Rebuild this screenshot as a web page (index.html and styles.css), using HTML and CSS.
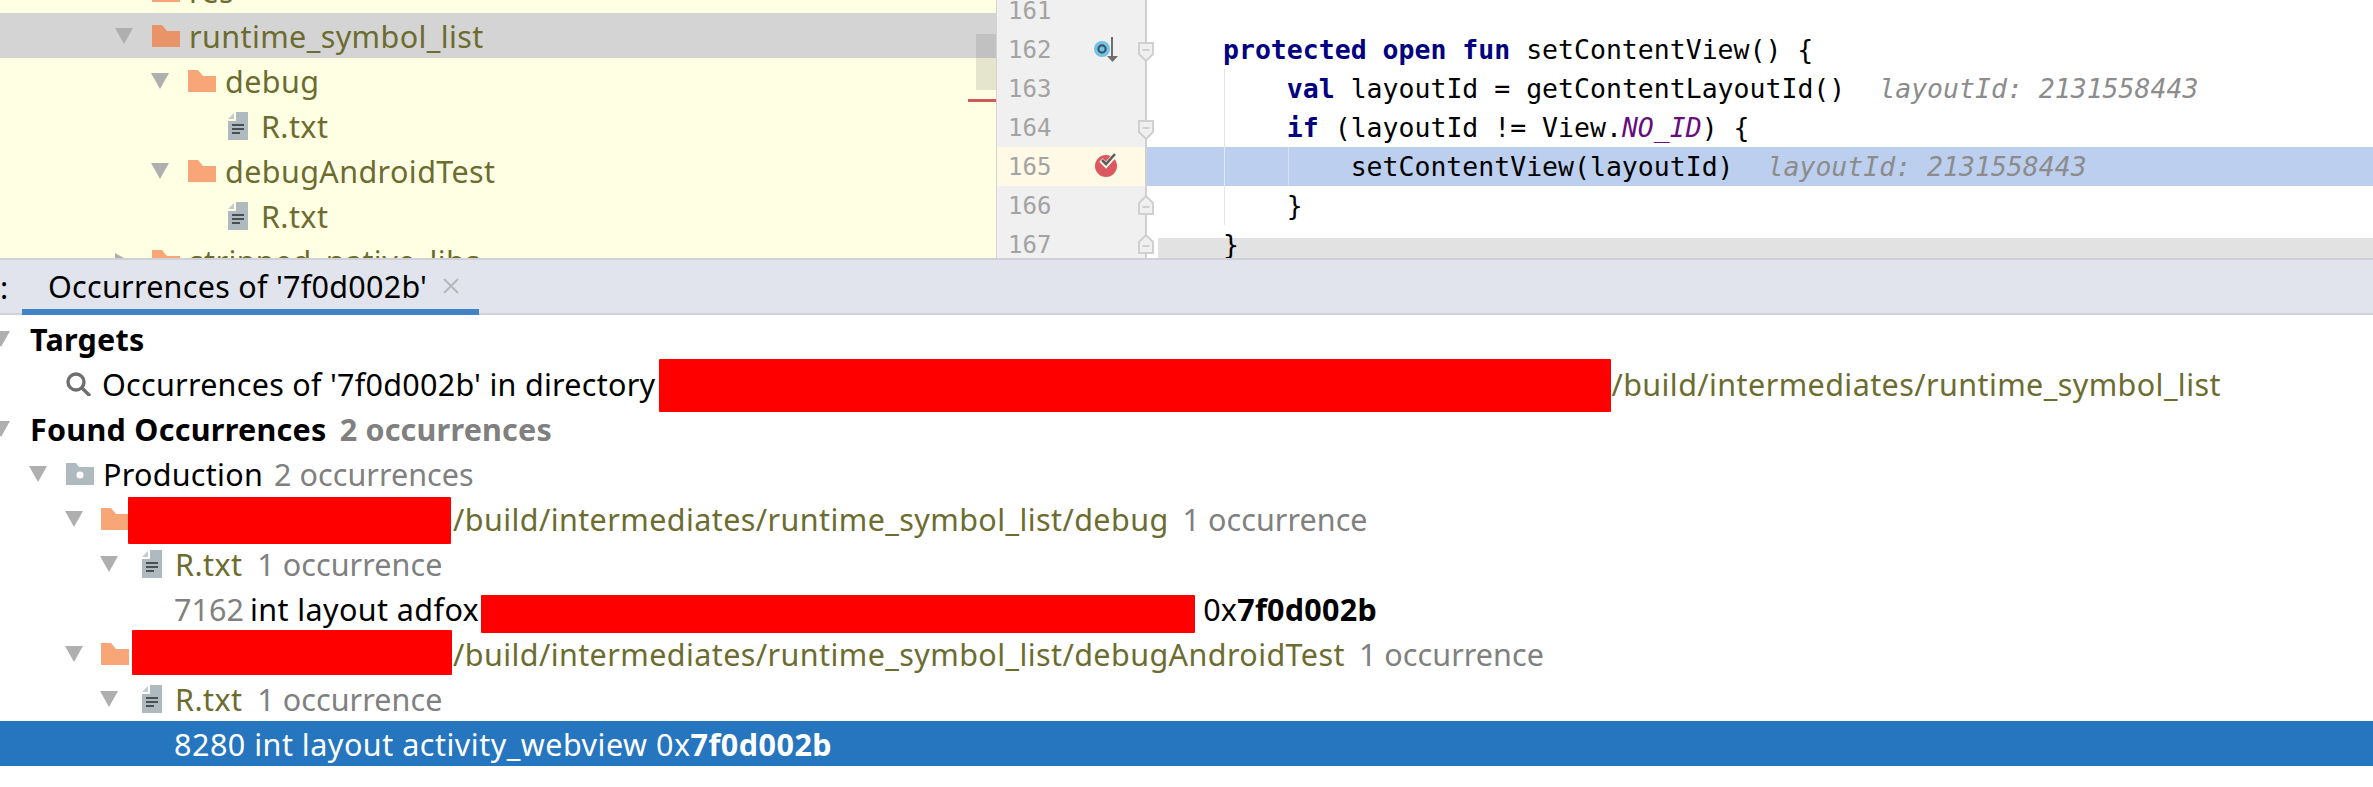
FILE: index.html
```html
<!DOCTYPE html>
<html lang="en">
<head>
<meta charset="utf-8">
<title>Occurrences of '7f0d002b'</title>
<link rel="stylesheet" href="styles.css">
</head>
<body>
<svg class="defs" width="0" height="0">
  <defs>
    <symbol id="arrow-down" viewBox="0 0 18 16"><path d="M0 0H18L9 16Z" fill="#afafaf"/></symbol>
    <symbol id="folder" viewBox="0 0 28 22"><path d="M0 0H10L15 6H28V22H0Z"/></symbol>
    <symbol id="txt" viewBox="0 0 20 28"><path d="M8 0H20V28H0V9H8Z" fill="#afb9c0"/><path d="M6 1V7H0Z" fill="#c3cbd1"/><path d="M4 13H16M4 17H16M4 21H12" stroke="#4a4f52" stroke-width="2"/></symbol>
    <symbol id="fold-down" viewBox="0 0 16 20"><path d="M1 1H15V12L8 19L1 12Z" fill="#f0f0f0" stroke="#d0d0d0" stroke-width="2"/><path d="M4.5 8H11.5" stroke="#d0d0d0" stroke-width="2"/></symbol>
    <symbol id="fold-up" viewBox="0 0 16 20"><path d="M1 19H15V8L8 1L1 8Z" fill="#f0f0f0" stroke="#d0d0d0" stroke-width="2"/><path d="M4.5 12H11.5" stroke="#d0d0d0" stroke-width="2"/></symbol>
  </defs>
</svg>

<div class="top">
  <div class="tree">
    <div class="row lvl1"><svg class="tw"><use href="#arrow-down"/></svg><svg class="fo"><use href="#folder"/></svg><span class="ol">res</span></div>
    <div class="row lvl1 picked"><svg class="tw"><use href="#arrow-down"/></svg><svg class="fo dark"><use href="#folder"/></svg><span class="ol">runtime_symbol_list</span></div>
    <div class="row lvl2"><svg class="tw"><use href="#arrow-down"/></svg><svg class="fo"><use href="#folder"/></svg><span class="ol">debug</span></div>
    <div class="row lvl3"><svg class="tf"><use href="#txt"/></svg><span class="ol">R.txt</span></div>
    <div class="row lvl2"><svg class="tw"><use href="#arrow-down"/></svg><svg class="fo"><use href="#folder"/></svg><span class="ol">debugAndroidTest</span></div>
    <div class="row lvl3"><svg class="tf"><use href="#txt"/></svg><span class="ol">R.txt</span></div>
    <div class="row lvl1"><svg class="tw"><path d="M0 0L16 9L0 18Z" fill="#afafaf"/></svg><svg class="fo"><use href="#folder"/></svg><span class="ol">stripped_native_libs</span></div>
    <div class="thumb"></div>
    <div class="redmark"></div>
  </div>

  <div class="gutter">
    <div class="gl"><span class="num">161</span></div>
    <div class="gl"><span class="num">162</span>
      <svg class="gi" viewBox="0 0 30 30"><circle cx="10" cy="15" r="8" fill="#6ec3e6"/><circle cx="10" cy="15" r="3.6" fill="none" stroke="#3e5666" stroke-width="2.2"/><path d="M20 3V24" stroke="#6e6e6e" stroke-width="2"/><path d="M15 22H26L20.500 28Z" fill="#6e6e6e"/></svg>
      <svg class="fold"><use href="#fold-down"/></svg></div>
    <div class="gl"><span class="num">163</span></div>
    <div class="gl"><span class="num">164</span><svg class="fold"><use href="#fold-down"/></svg></div>
    <div class="gl cur"><span class="num">165</span>
      <svg class="gi gi-bp" viewBox="0 0 30 30"><circle cx="11" cy="17" r="11" fill="#db5860"/><path d="M6 11L11 16L20 6" fill="none" stroke="#fff6ea" stroke-width="5"/><path d="M7 11L11 15L20 5" fill="none" stroke="#5e5e5e" stroke-width="2.600"/></svg></div>
    <div class="gl"><span class="num">166</span><svg class="fold up"><use href="#fold-up"/></svg></div>
    <div class="gl"><span class="num">167</span><svg class="fold up"><use href="#fold-up"/></svg></div>
  </div>

  <div class="editor">
    <div class="line"></div>
    <div class="line"><b>protected open fun</b> setContentView() {</div>
    <div class="line">    <b>val</b> layoutId = getContentLayoutId()<i class="hint">layoutId: 2131558443</i></div>
    <div class="line">    <b>if</b> (layoutId != View.<em>NO_ID</em>) {</div>
    <div class="line hl">        setContentView(layoutId)<i class="hint">layoutId: 2131558443</i></div>
    <div class="line">    }</div>
    <div class="line end">}</div>
    <div class="guide g1"></div>
    <div class="guide g2"></div>
  </div>
</div>

<div class="bar">
  <span class="colon">:</span>
  <div class="tab"><span>Occurrences of '7f0d002b'</span><svg class="close" viewBox="0 0 16 16"><path d="M1 1L15 15M15 1L1 15" stroke="#b4b7bd" stroke-width="2"/></svg></div>
</div>

<div class="results">
  <div class="rrow r0"><svg class="tw cut"><use href="#arrow-down"/></svg><strong>Targets</strong></div>
  <div class="rrow r1"><svg class="ic" viewBox="0 0 28 24"><circle cx="11" cy="10" r="8" fill="none" stroke="#6e6e6e" stroke-width="3.4"/><path d="M17 16L25 24" stroke="#6e6e6e" stroke-width="3.4"/></svg><span class="t">Occurrences of '7f0d002b' in directory</span><span class="red red-a"></span><span class="ol">/build/intermediates/runtime_symbol_list</span></div>
  <div class="rrow r0"><svg class="tw cut"><use href="#arrow-down"/></svg><strong>Found Occurrences</strong><strong class="cnt cb">2 occurrences</strong></div>
  <div class="rrow r1b"><svg class="tw"><use href="#arrow-down"/></svg><svg class="ic2" viewBox="0 0 28 22"><path d="M0 0H10L13 4H28V22H0Z" fill="#afb9c0"/><circle cx="14" cy="12" r="3.500" fill="#fff"/></svg><span class="t">Production</span><span class="cnt c1">2 occurrences</span></div>
  <div class="rrow r2"><svg class="tw"><use href="#arrow-down"/></svg><svg class="fo"><use href="#folder"/></svg><span class="red red-b"></span><span class="ol">/build/intermediates/runtime_symbol_list/debug</span><span class="cnt c2">1 occurrence</span></div>
  <div class="rrow r3"><svg class="tw"><use href="#arrow-down"/></svg><svg class="tf"><use href="#txt"/></svg><span class="ol">R.txt</span><span class="cnt c3">1 occurrence</span></div>
  <div class="rrow r4"><span class="cnt">7162</span><span class="t s1">int layout adfox</span><span class="red red-c"></span><span class="t">0x<strong>7f0d002b</strong></span></div>
  <div class="rrow r2"><svg class="tw"><use href="#arrow-down"/></svg><svg class="fo"><use href="#folder"/></svg><span class="red red-d"></span><span class="ol">/build/intermediates/runtime_symbol_list/debugAndroidTest</span><span class="cnt c2">1 occurrence</span></div>
  <div class="rrow r3"><svg class="tw"><use href="#arrow-down"/></svg><svg class="tf"><use href="#txt"/></svg><span class="ol">R.txt</span><span class="cnt c3">1 occurrence</span></div>
  <div class="rrow r4 sel"><span>8280 int layout activity_webview 0x<strong>7f0d002b</strong></span></div>
</div>
</body>
</html>
```
FILE: styles.css
```css
* { box-sizing: border-box; }
html, body { margin: 0; height: 100%; background: #fff; overflow: hidden; }
body { font-family: "Noto Sans", sans-serif; font-size: 30.5px; letter-spacing: 0.27px; color: #000; width: 2373px; height: 787px; }
.defs { position: absolute; }

.top { display: flex; height: 258px; overflow: hidden; letter-spacing: normal; }

.tree { position: relative; width: 997px; flex: none; background: #ffffe4; overflow: hidden; border-right: 1px solid #d4d4d0; letter-spacing: 0.4px; }
.tree .row:first-child { margin-top: -32px; }
.row { display: flex; align-items: center; height: 45px; white-space: nowrap; }
.row.picked { background: #d4d4d4; }
.lvl1 { padding-left: 115px; }
.lvl2 { padding-left: 151px; }
.lvl3 { padding-left: 228px; }
.tw { width: 18px; height: 16px; flex: none; margin-right: 19px; }
.fo { width: 28px; height: 22px; flex: none; margin-right: 9px; fill: #f8a678; }
.fo.dark { fill: #e99468; }
.tf { width: 20px; height: 28px; flex: none; margin-right: 13px; }
.ol { color: #6c6c30; }
.thumb { position: absolute; left: 976px; top: 34px; width: 20px; height: 56px; background: rgba(100, 100, 100, 0.17); }
.redmark { position: absolute; left: 968px; top: 99px; width: 28px; height: 3px; background: #d05a5a; }

.gutter { width: 150px; flex: none; background: #f0f0f0; border-right: 2px solid #d0d0d0; position: relative; }
.gl { position: relative; height: 39px; display: flex; align-items: center; padding-left: 11px; }
.gl:first-child { margin-top: -9px; }
.gl.cur { background: #fff9e6; }
.num { font-family: "DejaVu Sans Mono", monospace; font-size: 24px; color: #a3a3a3; }
.gi { position: absolute; left: 95px; top: 4px; width: 30px; height: 30px; }
.gi-bp { left: 98px; top: 2px; }
.fold { position: absolute; left: 141px; top: 12px; width: 16px; height: 20px; z-index: 2; overflow: visible; }
.fold.up { top: 9px; }

.editor { position: relative; flex: 1; min-width: 0; font-family: "DejaVu Sans Mono", monospace; font-size: 26.5px; }
.line { height: 39px; line-height: 39px; padding-left: 76px; white-space: pre; color: #000; }
.line:first-child { margin-top: -9px; }
.line b { color: #000080; font-weight: 700; }
.line em { color: #660e7a; font-style: italic; }
.hint { color: #8c8c8c; font-style: italic; margin-left: 34px; }
.hl { background: #bdcfee; }
.end { background: linear-gradient(#e2e2e2, #e2e2e2) no-repeat 11px 13px / 100% 26px; }
.guide { position: absolute; width: 1px; background: #e6e6e6; }
.g1 { left: 77px; top: 69px; height: 156px; }
.g2 { left: 141px; top: 147px; height: 39px; background: #d5e0f3; }

.bar { display: flex; height: 57px; background: #e1e4ec; border-top: 2px solid #cfd1d6; border-bottom: 2px solid #d0d2d8; }
.colon { width: 22px; line-height: 54px; }
.tab { display: flex; align-items: center; width: 457px; height: 55px; padding-left: 26px; padding-top: 2px; border-bottom: 6px solid #4083c9; white-space: nowrap; }
.close { width: 16px; height: 16px; margin-left: 16px; }

.results { padding-top: 1px; }
.results .ol { letter-spacing: 0.41px; }
.rrow { display: flex; align-items: center; height: 45px; white-space: nowrap; position: relative; }
.r0 .tw { width: 18px; margin-left: -8px; margin-right: 20px; }
.r1 { padding-left: 65px; }
.r1b { padding-left: 29px; }
.r2 { padding-left: 65px; }
.r3 { padding-left: 100px; }
.r4 { padding-left: 174px; }
.ic { width: 28px; height: 24px; flex: none; margin-right: 9px; }
.ic2 { width: 28px; height: 22px; flex: none; margin-right: 9px; }
.r2 .tw { margin-right: 18px; }
.r3 .tw { margin-right: 24px; }
.cnt { color: #808080; letter-spacing: 0.05px; }
.cb { margin-left: 13px; letter-spacing: 0.2px; }
.c1 { margin-left: 11px; }
.c2 { margin-left: 14px; }
.c3 { margin-left: 15px; }
.s1 { margin-left: 6px; letter-spacing: 0.4px; }

.red { background: #f00; flex: none; align-self: flex-start; border-radius: 1px; }
.red-a { width: 952px; height: 53px; margin: -2px 0 0 4px; }
.red-b { width: 323px; height: 47px; margin: 1px 2px 0 -10px; }
.red-c { width: 714px; height: 38px; margin: 9px 8px 0 2px; }
.red-d { width: 320px; height: 45px; margin: -1px 1px 0 -6px; }

.sel { background: #2675bf; color: #fff; letter-spacing: 0.5px; }
```
